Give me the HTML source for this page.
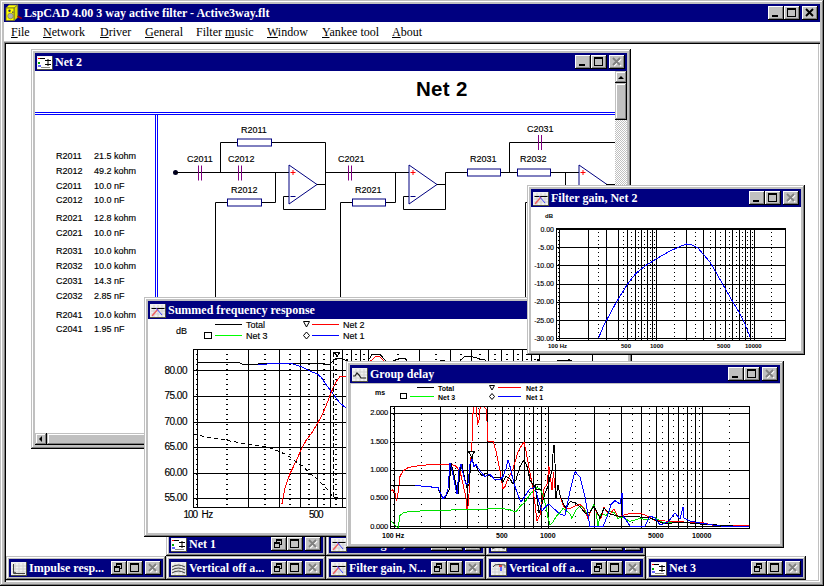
<!DOCTYPE html><html><head><meta charset="utf-8"><style>body{margin:0;width:824px;height:586px;overflow:hidden;position:relative;background:#c0c0c0}u{text-decoration:underline}</style></head><body><div style="position:absolute;left:0px;top:0px;width:824px;height:586px;background:#c0c0c0;box-shadow:inset -1px -1px 0 #000, inset 1px 1px 0 #c0c0c0, inset -2px -2px 0 #808080, inset 2px 2px 0 #fff;"></div><div style="position:absolute;left:4px;top:4px;width:816px;height:18px;background:#000080;"></div><div style="position:absolute;left:24px;top:6px;height:18px;line-height:18px;font:bold 12px 'Liberation Serif',serif;color:#fff;white-space:nowrap">LspCAD 4.00 3 way active filter - Active3way.flt</div><svg style="position:absolute;left:3px;top:3px" width="22" height="20"><g transform="translate(-3,-3)"><path d="M6 8 L9 5 L17.7 5 L14 8 Z" fill="#ffff00" stroke="#808040" stroke-width="0.8"/><path d="M14 8 L17.7 5 L17.7 17.5 L14 20.7 Z" fill="#e0e000" stroke="#808040" stroke-width="0.8"/><rect x="6" y="8" width="8" height="12.7" fill="#ffff00" stroke="#606020" stroke-width="0.8"/><circle cx="10.5" cy="16" r="2.8" fill="#b0b0b0" stroke="#707050" stroke-width="0.6"/><circle cx="9.5" cy="10.8" r="1.2" fill="#303060"/><rect x="12" y="11.5" width="1.5" height="1.5" fill="#606040"/><path d="M17.5 16.3 L21.8 18.5" stroke="#a00010" stroke-width="1.6"/></g></svg><div style="position:absolute;left:768px;top:6px;width:16px;height:14px;background:#c0c0c0;box-shadow:inset -1px -1px 0 #000, inset 1px 1px 0 #fff, inset -2px -2px 0 #808080;overflow:hidden"><div style="position:absolute;left:4px;top:9px;width:6px;height:2px;background:#000"></div></div><div style="position:absolute;left:784px;top:6px;width:16px;height:14px;background:#c0c0c0;box-shadow:inset -1px -1px 0 #000, inset 1px 1px 0 #fff, inset -2px -2px 0 #808080;overflow:hidden"><div style="position:absolute;left:3px;top:2px;width:7px;height:6px;border:1px solid #000;border-top-width:2px"></div></div><div style="position:absolute;left:802px;top:6px;width:16px;height:14px;background:#c0c0c0;box-shadow:inset -1px -1px 0 #000, inset 1px 1px 0 #fff, inset -2px -2px 0 #808080;overflow:hidden"><svg width="16" height="14" style="position:absolute;left:0;top:0"><path d="M4 3 L11 10 M11 3 L4 10" stroke="#000" stroke-width="1.9"/></svg></div><div style="position:absolute;left:4px;top:22px;width:816px;height:19px;background:#fff;"></div><div style="position:absolute;left:11px;top:26px;font:12px 'Liberation Serif',serif;color:#000;white-space:pre;line-height:1;"><u>F</u>ile</div><div style="position:absolute;left:43px;top:26px;font:12px 'Liberation Serif',serif;color:#000;white-space:pre;line-height:1;"><u>N</u>etwork</div><div style="position:absolute;left:100px;top:26px;font:12px 'Liberation Serif',serif;color:#000;white-space:pre;line-height:1;"><u>D</u>river</div><div style="position:absolute;left:145px;top:26px;font:12px 'Liberation Serif',serif;color:#000;white-space:pre;line-height:1;"><u>G</u>eneral</div><div style="position:absolute;left:196px;top:26px;font:12px 'Liberation Serif',serif;color:#000;white-space:pre;line-height:1;">Filter <u>m</u>usic</div><div style="position:absolute;left:267px;top:26px;font:12px 'Liberation Serif',serif;color:#000;white-space:pre;line-height:1;"><u>W</u>indow</div><div style="position:absolute;left:322px;top:26px;font:12px 'Liberation Serif',serif;color:#000;white-space:pre;line-height:1;"><u>Y</u>ankee tool</div><div style="position:absolute;left:392px;top:26px;font:12px 'Liberation Serif',serif;color:#000;white-space:pre;line-height:1;"><u>A</u>bout</div><div style="position:absolute;left:4px;top:42px;width:816px;height:540px;background:#fff;box-shadow:inset 1px 1px 0 #808080, inset 2px 2px 0 #000, inset -1px -1px 0 #fff, inset -2px -2px 0 #c0c0c0"></div><div style="position:absolute;left:31px;top:49px;width:600px;height:400px;background:#c0c0c0;box-shadow:inset -1px -1px 0 #000, inset 1px 1px 0 #c0c0c0, inset -2px -2px 0 #808080, inset 2px 2px 0 #fff;"></div><div style="position:absolute;left:35px;top:53px;width:592px;height:18px;background:#000080;"></div><div style="position:absolute;left:55px;top:55px;height:18px;line-height:18px;font:bold 12px 'Liberation Serif',serif;color:#fff;white-space:nowrap">Net 2</div><svg style="position:absolute;left:37px;top:56px" width="16" height="14"><rect x="0" y="0" width="16" height="14" fill="#505040"/><rect x="0" y="0" width="15" height="13" fill="#f0f0f0"/><path d="M1 4H15M1 7H15M1 10H15M4 1V13M8 1V13M12 1V13" stroke="#d0d0d0" stroke-width="1"/><rect x="1" y="1" width="14" height="12" fill="#fff"/><path d="M3 2.5 H8 M8 4.5 H14 M8 8.5 H14 M11 3 V10" stroke="#000" stroke-width="1"/><rect x="1" y="2" width="2" height="1" fill="#f00"/><rect x="1" y="6" width="2" height="2" fill="#0a0"/><rect x="1" y="9" width="3" height="2" fill="#66f"/><path d="M4 11.5 H13" stroke="#888" stroke-width="1"/></svg><div style="position:absolute;left:609px;top:55px;width:16px;height:14px;background:#c0c0c0;box-shadow:inset -1px -1px 0 #000, inset 1px 1px 0 #fff, inset -2px -2px 0 #808080;overflow:hidden"><svg width="16" height="14" style="position:absolute;left:0;top:0"><path d="M5 4 L12 11 M12 4 L5 11" stroke="#fff" stroke-width="1.6"/><path d="M4 3 L11 10 M11 3 L4 10" stroke="#808080" stroke-width="1.9"/></svg></div><div style="position:absolute;left:591px;top:55px;width:16px;height:14px;background:#c0c0c0;box-shadow:inset -1px -1px 0 #000, inset 1px 1px 0 #fff, inset -2px -2px 0 #808080;overflow:hidden"><div style="position:absolute;left:3px;top:2px;width:7px;height:6px;border:1px solid #000;border-top-width:2px"></div></div><div style="position:absolute;left:575px;top:55px;width:16px;height:14px;background:#c0c0c0;box-shadow:inset -1px -1px 0 #000, inset 1px 1px 0 #fff, inset -2px -2px 0 #808080;overflow:hidden"><div style="position:absolute;left:4px;top:9px;width:6px;height:2px;background:#000"></div></div><div style="position:absolute;left:35px;top:71px;width:580px;height:362px;background:#fff;overflow:hidden"><svg width="580" height="362" style="position:absolute;left:0;top:0"><g transform="translate(-35,-71)"><line x1="35" y1="112.5" x2="615" y2="112.5" stroke="#0000ff" stroke-width="1" /><line x1="35" y1="114.5" x2="615" y2="114.5" stroke="#0000ff" stroke-width="1" /><line x1="155.5" y1="114" x2="155.5" y2="433" stroke="#0000ff" stroke-width="1" /><line x1="157.5" y1="114" x2="157.5" y2="433" stroke="#0000ff" stroke-width="1" /><circle cx="175.5" cy="172.5" r="2.5" fill="#000020"/><polyline points="175.5,172.5 289.0,172.5" fill="none" stroke="#000" stroke-width="1" stroke-linejoin="round" stroke-linejoin="miter"/><polyline points="220.5,172.5 220.5,142.5 325.5,142.5 325.5,209.5 283.5,209.5 283.5,196.5 289.0,196.5" fill="none" stroke="#000" stroke-width="1" stroke-linejoin="round" stroke-linejoin="miter"/><polyline points="316.0,184.5 325.5,184.5" fill="none" stroke="#000" stroke-width="1" stroke-linejoin="round" stroke-linejoin="miter"/><polyline points="325.5,172.5 409.0,172.5" fill="none" stroke="#000" stroke-width="1" stroke-linejoin="round" stroke-linejoin="miter"/><polyline points="275.5,172.5 275.5,202.5 215.5,202.5 215.5,440.0" fill="none" stroke="#000" stroke-width="1" stroke-linejoin="round" stroke-linejoin="miter"/><rect x="237.5" y="139.0" width="34" height="7" fill="#fff" stroke="#000080" stroke-width="1"/><rect x="227.5" y="199.0" width="34" height="7" fill="#fff" stroke="#000080" stroke-width="1"/><line x1="198.5" y1="165.5" x2="198.5" y2="180.5" stroke="#800080" stroke-width="1" /><line x1="201.5" y1="165.5" x2="201.5" y2="180.5" stroke="#800080" stroke-width="1" /><line x1="238.5" y1="165.5" x2="238.5" y2="180.5" stroke="#800080" stroke-width="1" /><line x1="241.5" y1="165.5" x2="241.5" y2="180.5" stroke="#800080" stroke-width="1" /><polygon points="289.0,165 289.0,204 317,184.5" fill="#fff" stroke="#000080" stroke-width="1"/><line x1="290.5" y1="172.5" x2="295.5" y2="172.5" stroke="#ff0000" stroke-width="1" /><line x1="293.0" y1="170" x2="293.0" y2="175" stroke="#ff0000" stroke-width="1" /><line x1="290.5" y1="196.5" x2="295.5" y2="196.5" stroke="#000080" stroke-width="1" /><polyline points="395.5,172.5 395.5,202.5 340.5,202.5 340.5,440.0" fill="none" stroke="#000" stroke-width="1" stroke-linejoin="round" stroke-linejoin="miter"/><polyline points="409.0,196.5 403.5,196.5 403.5,209.5 445.5,209.5 445.5,172.5 467.0,172.5" fill="none" stroke="#000" stroke-width="1" stroke-linejoin="round" stroke-linejoin="miter"/><polyline points="436.0,184.5 445.5,184.5" fill="none" stroke="#000" stroke-width="1" stroke-linejoin="round" stroke-linejoin="miter"/><rect x="352.5" y="199.0" width="33" height="7" fill="#fff" stroke="#000080" stroke-width="1"/><line x1="348.5" y1="165.5" x2="348.5" y2="180.5" stroke="#800080" stroke-width="1" /><line x1="351.5" y1="165.5" x2="351.5" y2="180.5" stroke="#800080" stroke-width="1" /><polygon points="409.0,165 409.0,204 437,184.5" fill="#fff" stroke="#000080" stroke-width="1"/><line x1="410.5" y1="172.5" x2="415.5" y2="172.5" stroke="#ff0000" stroke-width="1" /><line x1="413.0" y1="170" x2="413.0" y2="175" stroke="#ff0000" stroke-width="1" /><line x1="410.5" y1="196.5" x2="415.5" y2="196.5" stroke="#000080" stroke-width="1" /><polyline points="467.0,172.5 579.0,172.5" fill="none" stroke="#000" stroke-width="1" stroke-linejoin="round" stroke-linejoin="miter"/><polyline points="509.5,172.5 509.5,142.5 620.0,142.5" fill="none" stroke="#000" stroke-width="1" stroke-linejoin="round" stroke-linejoin="miter"/><polyline points="565.5,172.5 565.5,440.0" fill="none" stroke="#000" stroke-width="1" stroke-linejoin="round" stroke-linejoin="miter"/><polyline points="525.5,440.0 525.5,202.5 565.5,202.5" fill="none" stroke="#000" stroke-width="1" stroke-linejoin="round" stroke-linejoin="miter"/><rect x="467.5" y="169.0" width="33" height="7" fill="#fff" stroke="#000080" stroke-width="1"/><rect x="517.5" y="169.0" width="33" height="7" fill="#fff" stroke="#000080" stroke-width="1"/><line x1="538.5" y1="135" x2="538.5" y2="150" stroke="#800080" stroke-width="1" /><line x1="541.5" y1="135" x2="541.5" y2="150" stroke="#800080" stroke-width="1" /><polygon points="579.0,165 579.0,204 607,184.5" fill="#fff" stroke="#000080" stroke-width="1"/><line x1="580.5" y1="172.5" x2="585.5" y2="172.5" stroke="#ff0000" stroke-width="1" /><line x1="583.0" y1="170" x2="583.0" y2="175" stroke="#ff0000" stroke-width="1" /><line x1="580.5" y1="196.5" x2="585.5" y2="196.5" stroke="#000080" stroke-width="1" /><polyline points="606.0,184.5 620.0,184.5" fill="none" stroke="#000" stroke-width="1" stroke-linejoin="round" stroke-linejoin="miter"/></g></svg></div><div style="position:absolute;left:416px;top:78.5px;font:bold 20.5px 'Liberation Sans',sans-serif;color:#000;white-space:pre;line-height:1;letter-spacing:0.3px">Net 2</div><div style="position:absolute;left:187px;top:154.5px;font:9px 'Liberation Sans',sans-serif;color:#000;white-space:pre;line-height:1;-webkit-text-stroke:0.15px #000;">C2011</div><div style="position:absolute;left:228px;top:154.5px;font:9px 'Liberation Sans',sans-serif;color:#000;white-space:pre;line-height:1;-webkit-text-stroke:0.15px #000;">C2012</div><div style="position:absolute;left:241px;top:125.5px;font:9px 'Liberation Sans',sans-serif;color:#000;white-space:pre;line-height:1;-webkit-text-stroke:0.15px #000;">R2011</div><div style="position:absolute;left:231px;top:185.5px;font:9px 'Liberation Sans',sans-serif;color:#000;white-space:pre;line-height:1;-webkit-text-stroke:0.15px #000;">R2012</div><div style="position:absolute;left:338px;top:154.5px;font:9px 'Liberation Sans',sans-serif;color:#000;white-space:pre;line-height:1;-webkit-text-stroke:0.15px #000;">C2021</div><div style="position:absolute;left:355px;top:185.5px;font:9px 'Liberation Sans',sans-serif;color:#000;white-space:pre;line-height:1;-webkit-text-stroke:0.15px #000;">R2021</div><div style="position:absolute;left:470px;top:154.5px;font:9px 'Liberation Sans',sans-serif;color:#000;white-space:pre;line-height:1;-webkit-text-stroke:0.15px #000;">R2031</div><div style="position:absolute;left:520px;top:154.5px;font:9px 'Liberation Sans',sans-serif;color:#000;white-space:pre;line-height:1;-webkit-text-stroke:0.15px #000;">R2032</div><div style="position:absolute;left:527px;top:124.5px;font:9px 'Liberation Sans',sans-serif;color:#000;white-space:pre;line-height:1;-webkit-text-stroke:0.15px #000;">C2031</div><div style="position:absolute;left:56px;top:152px;font:9px 'Liberation Sans',sans-serif;color:#000;white-space:pre;line-height:1;-webkit-text-stroke:0.15px #000;">R2011</div><div style="position:absolute;left:94px;top:152px;font:9px 'Liberation Sans',sans-serif;color:#000;white-space:pre;line-height:1;-webkit-text-stroke:0.15px #000;">21.5 kohm</div><div style="position:absolute;left:56px;top:167px;font:9px 'Liberation Sans',sans-serif;color:#000;white-space:pre;line-height:1;-webkit-text-stroke:0.15px #000;">R2012</div><div style="position:absolute;left:94px;top:167px;font:9px 'Liberation Sans',sans-serif;color:#000;white-space:pre;line-height:1;-webkit-text-stroke:0.15px #000;">49.2 kohm</div><div style="position:absolute;left:56px;top:182px;font:9px 'Liberation Sans',sans-serif;color:#000;white-space:pre;line-height:1;-webkit-text-stroke:0.15px #000;">C2011</div><div style="position:absolute;left:94px;top:182px;font:9px 'Liberation Sans',sans-serif;color:#000;white-space:pre;line-height:1;-webkit-text-stroke:0.15px #000;">10.0 nF</div><div style="position:absolute;left:56px;top:196px;font:9px 'Liberation Sans',sans-serif;color:#000;white-space:pre;line-height:1;-webkit-text-stroke:0.15px #000;">C2012</div><div style="position:absolute;left:94px;top:196px;font:9px 'Liberation Sans',sans-serif;color:#000;white-space:pre;line-height:1;-webkit-text-stroke:0.15px #000;">10.0 nF</div><div style="position:absolute;left:56px;top:214px;font:9px 'Liberation Sans',sans-serif;color:#000;white-space:pre;line-height:1;-webkit-text-stroke:0.15px #000;">R2021</div><div style="position:absolute;left:94px;top:214px;font:9px 'Liberation Sans',sans-serif;color:#000;white-space:pre;line-height:1;-webkit-text-stroke:0.15px #000;">12.8 kohm</div><div style="position:absolute;left:56px;top:229px;font:9px 'Liberation Sans',sans-serif;color:#000;white-space:pre;line-height:1;-webkit-text-stroke:0.15px #000;">C2021</div><div style="position:absolute;left:94px;top:229px;font:9px 'Liberation Sans',sans-serif;color:#000;white-space:pre;line-height:1;-webkit-text-stroke:0.15px #000;">10.0 nF</div><div style="position:absolute;left:56px;top:247px;font:9px 'Liberation Sans',sans-serif;color:#000;white-space:pre;line-height:1;-webkit-text-stroke:0.15px #000;">R2031</div><div style="position:absolute;left:94px;top:247px;font:9px 'Liberation Sans',sans-serif;color:#000;white-space:pre;line-height:1;-webkit-text-stroke:0.15px #000;">10.0 kohm</div><div style="position:absolute;left:56px;top:262px;font:9px 'Liberation Sans',sans-serif;color:#000;white-space:pre;line-height:1;-webkit-text-stroke:0.15px #000;">R2032</div><div style="position:absolute;left:94px;top:262px;font:9px 'Liberation Sans',sans-serif;color:#000;white-space:pre;line-height:1;-webkit-text-stroke:0.15px #000;">10.0 kohm</div><div style="position:absolute;left:56px;top:277px;font:9px 'Liberation Sans',sans-serif;color:#000;white-space:pre;line-height:1;-webkit-text-stroke:0.15px #000;">C2031</div><div style="position:absolute;left:94px;top:277px;font:9px 'Liberation Sans',sans-serif;color:#000;white-space:pre;line-height:1;-webkit-text-stroke:0.15px #000;">14.3 nF</div><div style="position:absolute;left:56px;top:292px;font:9px 'Liberation Sans',sans-serif;color:#000;white-space:pre;line-height:1;-webkit-text-stroke:0.15px #000;">C2032</div><div style="position:absolute;left:94px;top:292px;font:9px 'Liberation Sans',sans-serif;color:#000;white-space:pre;line-height:1;-webkit-text-stroke:0.15px #000;">2.85 nF</div><div style="position:absolute;left:56px;top:310.5px;font:9px 'Liberation Sans',sans-serif;color:#000;white-space:pre;line-height:1;-webkit-text-stroke:0.15px #000;">R2041</div><div style="position:absolute;left:94px;top:310.5px;font:9px 'Liberation Sans',sans-serif;color:#000;white-space:pre;line-height:1;-webkit-text-stroke:0.15px #000;">10.0 kohm</div><div style="position:absolute;left:56px;top:325px;font:9px 'Liberation Sans',sans-serif;color:#000;white-space:pre;line-height:1;-webkit-text-stroke:0.15px #000;">C2041</div><div style="position:absolute;left:94px;top:325px;font:9px 'Liberation Sans',sans-serif;color:#000;white-space:pre;line-height:1;-webkit-text-stroke:0.15px #000;">1.95 nF</div><div style="position:absolute;left:615px;top:71px;width:12px;height:362px;background:#c0c0c0;background-image:repeating-conic-gradient(#fff 0 25%, #c0c0c0 0 50%);background-size:2px 2px"></div><div style="position:absolute;left:615px;top:71px;width:12px;height:12px;background:#c0c0c0;box-shadow:inset -1px -1px 0 #000, inset 1px 1px 0 #c0c0c0, inset -2px -2px 0 #808080, inset 2px 2px 0 #fff;overflow:hidden"></div><svg style="position:absolute;left:615px;top:71px" width="12" height="12"><path d="M3 8 L6 5 L9 8 Z" fill="#000"/></svg><div style="position:absolute;left:615px;top:83px;width:12px;height:37px;background:#c0c0c0;box-shadow:inset -1px -1px 0 #000, inset 1px 1px 0 #c0c0c0, inset -2px -2px 0 #808080, inset 2px 2px 0 #fff;overflow:hidden"></div><div style="position:absolute;left:35px;top:433px;width:580px;height:12px;background:#c0c0c0;"></div><div style="position:absolute;left:35px;top:433px;width:12px;height:12px;background:#c0c0c0;box-shadow:inset -1px -1px 0 #000, inset 1px 1px 0 #c0c0c0, inset -2px -2px 0 #808080, inset 2px 2px 0 #fff;overflow:hidden"></div><svg style="position:absolute;left:35px;top:433px" width="12" height="12"><path d="M7 3 L4 6 L7 9 Z" fill="#000"/></svg><div style="position:absolute;left:47px;top:433px;width:568px;height:12px;background:#c0c0c0;box-shadow:inset -1px -1px 0 #000, inset 1px 1px 0 #c0c0c0, inset -2px -2px 0 #808080, inset 2px 2px 0 #fff;overflow:hidden"></div><div style="position:absolute;left:166px;top:532px;width:160px;height:24px;background:#c0c0c0;box-shadow:inset -1px -1px 0 #000, inset 1px 1px 0 #c0c0c0, inset -2px -2px 0 #808080, inset 2px 2px 0 #fff;"></div><div style="position:absolute;left:169px;top:535px;width:154px;height:18px;background:#000080;"></div><div style="position:absolute;left:189px;top:537px;height:18px;line-height:18px;font:bold 12px 'Liberation Serif',serif;color:#fff;white-space:nowrap">Net 1</div><svg style="position:absolute;left:171px;top:538px" width="16" height="14"><rect x="0" y="0" width="16" height="14" fill="#505040"/><rect x="0" y="0" width="15" height="13" fill="#f0f0f0"/><path d="M1 4H15M1 7H15M1 10H15M4 1V13M8 1V13M12 1V13" stroke="#d0d0d0" stroke-width="1"/><rect x="1" y="1" width="14" height="12" fill="#fff"/><path d="M3 2.5 H8 M8 4.5 H14 M8 8.5 H14 M11 3 V10" stroke="#000" stroke-width="1"/><rect x="1" y="2" width="2" height="1" fill="#f00"/><rect x="1" y="6" width="2" height="2" fill="#0a0"/><rect x="1" y="9" width="3" height="2" fill="#66f"/><path d="M4 11.5 H13" stroke="#888" stroke-width="1"/></svg><div style="position:absolute;left:305px;top:537px;width:16px;height:14px;background:#c0c0c0;box-shadow:inset -1px -1px 0 #000, inset 1px 1px 0 #fff, inset -2px -2px 0 #808080;overflow:hidden"><svg width="16" height="14" style="position:absolute;left:0;top:0"><path d="M5 4 L12 11 M12 4 L5 11" stroke="#fff" stroke-width="1.6"/><path d="M4 3 L11 10 M11 3 L4 10" stroke="#808080" stroke-width="1.9"/></svg></div><div style="position:absolute;left:287px;top:537px;width:16px;height:14px;background:#c0c0c0;box-shadow:inset -1px -1px 0 #000, inset 1px 1px 0 #fff, inset -2px -2px 0 #808080;overflow:hidden"><div style="position:absolute;left:3px;top:2px;width:7px;height:6px;border:1px solid #000;border-top-width:2px"></div></div><div style="position:absolute;left:271px;top:537px;width:16px;height:14px;background:#c0c0c0;box-shadow:inset -1px -1px 0 #000, inset 1px 1px 0 #fff, inset -2px -2px 0 #808080;overflow:hidden"><div style="position:absolute;left:5px;top:2px;width:4px;height:3px;border:1px solid #000;border-top-width:2px"></div><div style="position:absolute;left:3px;top:5px;width:4px;height:3px;border:1px solid #000;border-top-width:2px;background:#c0c0c0"></div></div><div style="position:absolute;left:326px;top:532px;width:160px;height:24px;background:#c0c0c0;box-shadow:inset -1px -1px 0 #000, inset 1px 1px 0 #c0c0c0, inset -2px -2px 0 #808080, inset 2px 2px 0 #fff;"></div><div style="position:absolute;left:329px;top:535px;width:154px;height:18px;background:#000080;"></div><div style="position:absolute;left:349px;top:537px;height:18px;line-height:18px;font:bold 12px 'Liberation Serif',serif;color:#fff;white-space:nowrap">Filter gain, N...</div><svg style="position:absolute;left:331px;top:538px" width="16" height="14"><rect x="0" y="0" width="16" height="14" fill="#505040"/><rect x="0" y="0" width="15" height="13" fill="#f0f0f0"/><path d="M1 4H15M1 7H15M1 10H15M4 1V13M8 1V13M12 1V13" stroke="#d0d0d0" stroke-width="1"/><path d="M1.5 4.5H14.5" stroke="#000" stroke-width="1"/><path d="M2 12 L8 5" stroke="#f06060" stroke-width="1.5"/><path d="M6 4 L12 11" stroke="#4040ff" stroke-width="1"/></svg><div style="position:absolute;left:465px;top:537px;width:16px;height:14px;background:#c0c0c0;box-shadow:inset -1px -1px 0 #000, inset 1px 1px 0 #fff, inset -2px -2px 0 #808080;overflow:hidden"><svg width="16" height="14" style="position:absolute;left:0;top:0"><path d="M5 4 L12 11 M12 4 L5 11" stroke="#fff" stroke-width="1.6"/><path d="M4 3 L11 10 M11 3 L4 10" stroke="#808080" stroke-width="1.9"/></svg></div><div style="position:absolute;left:447px;top:537px;width:16px;height:14px;background:#c0c0c0;box-shadow:inset -1px -1px 0 #000, inset 1px 1px 0 #fff, inset -2px -2px 0 #808080;overflow:hidden"><div style="position:absolute;left:3px;top:2px;width:7px;height:6px;border:1px solid #000;border-top-width:2px"></div></div><div style="position:absolute;left:431px;top:537px;width:16px;height:14px;background:#c0c0c0;box-shadow:inset -1px -1px 0 #000, inset 1px 1px 0 #fff, inset -2px -2px 0 #808080;overflow:hidden"><div style="position:absolute;left:5px;top:2px;width:4px;height:3px;border:1px solid #000;border-top-width:2px"></div><div style="position:absolute;left:3px;top:5px;width:4px;height:3px;border:1px solid #000;border-top-width:2px;background:#c0c0c0"></div></div><div style="position:absolute;left:486px;top:532px;width:160px;height:24px;background:#c0c0c0;box-shadow:inset -1px -1px 0 #000, inset 1px 1px 0 #c0c0c0, inset -2px -2px 0 #808080, inset 2px 2px 0 #fff;"></div><div style="position:absolute;left:489px;top:535px;width:154px;height:18px;background:#000080;"></div><div style="position:absolute;left:509px;top:537px;height:18px;line-height:18px;font:bold 12px 'Liberation Serif',serif;color:#fff;white-space:nowrap">Vertical off a...</div><svg style="position:absolute;left:491px;top:538px" width="16" height="14"><rect x="0" y="0" width="16" height="14" fill="#505040"/><rect x="0" y="0" width="15" height="13" fill="#f0f0f0"/><path d="M1 4H15M1 7H15M1 10H15M4 1V13M8 1V13M12 1V13" stroke="#d0d0d0" stroke-width="1"/><path d="M1 5 Q7 1 14 5 M1 8 Q7 4 14 8 M1 11 Q7 7 14 11" stroke="#404040" fill="none" stroke-width="1"/></svg><div style="position:absolute;left:625px;top:537px;width:16px;height:14px;background:#c0c0c0;box-shadow:inset -1px -1px 0 #000, inset 1px 1px 0 #fff, inset -2px -2px 0 #808080;overflow:hidden"><svg width="16" height="14" style="position:absolute;left:0;top:0"><path d="M5 4 L12 11 M12 4 L5 11" stroke="#fff" stroke-width="1.6"/><path d="M4 3 L11 10 M11 3 L4 10" stroke="#808080" stroke-width="1.9"/></svg></div><div style="position:absolute;left:607px;top:537px;width:16px;height:14px;background:#c0c0c0;box-shadow:inset -1px -1px 0 #000, inset 1px 1px 0 #fff, inset -2px -2px 0 #808080;overflow:hidden"><div style="position:absolute;left:3px;top:2px;width:7px;height:6px;border:1px solid #000;border-top-width:2px"></div></div><div style="position:absolute;left:591px;top:537px;width:16px;height:14px;background:#c0c0c0;box-shadow:inset -1px -1px 0 #000, inset 1px 1px 0 #fff, inset -2px -2px 0 #808080;overflow:hidden"><div style="position:absolute;left:5px;top:2px;width:4px;height:3px;border:1px solid #000;border-top-width:2px"></div><div style="position:absolute;left:3px;top:5px;width:4px;height:3px;border:1px solid #000;border-top-width:2px;background:#c0c0c0"></div></div><div style="position:absolute;left:144px;top:297px;width:488px;height:240px;background:#c0c0c0;box-shadow:inset -1px -1px 0 #000, inset 1px 1px 0 #c0c0c0, inset -2px -2px 0 #808080, inset 2px 2px 0 #fff;"></div><div style="position:absolute;left:148px;top:301px;width:480px;height:18px;background:#000080;"></div><div style="position:absolute;left:168px;top:303px;height:18px;line-height:18px;font:bold 12px 'Liberation Serif',serif;color:#fff;white-space:nowrap">Summed frequency response</div><svg style="position:absolute;left:150px;top:304px" width="16" height="14"><rect x="0" y="0" width="16" height="14" fill="#505040"/><rect x="0" y="0" width="15" height="13" fill="#f0f0f0"/><path d="M1 4H15M1 7H15M1 10H15M4 1V13M8 1V13M12 1V13" stroke="#d0d0d0" stroke-width="1"/><path d="M1.5 4.5H14.5" stroke="#000" stroke-width="1"/><path d="M2 12 L8 5" stroke="#f06060" stroke-width="1.5"/><path d="M6 4 L12 11" stroke="#4040ff" stroke-width="1"/></svg><div style="position:absolute;left:610px;top:303px;width:16px;height:14px;background:#c0c0c0;box-shadow:inset -1px -1px 0 #000, inset 1px 1px 0 #fff, inset -2px -2px 0 #808080;overflow:hidden"><svg width="16" height="14" style="position:absolute;left:0;top:0"><path d="M5 4 L12 11 M12 4 L5 11" stroke="#fff" stroke-width="1.6"/><path d="M4 3 L11 10 M11 3 L4 10" stroke="#808080" stroke-width="1.9"/></svg></div><div style="position:absolute;left:592px;top:303px;width:16px;height:14px;background:#c0c0c0;box-shadow:inset -1px -1px 0 #000, inset 1px 1px 0 #fff, inset -2px -2px 0 #808080;overflow:hidden"><div style="position:absolute;left:3px;top:2px;width:7px;height:6px;border:1px solid #000;border-top-width:2px"></div></div><div style="position:absolute;left:576px;top:303px;width:16px;height:14px;background:#c0c0c0;box-shadow:inset -1px -1px 0 #000, inset 1px 1px 0 #fff, inset -2px -2px 0 #808080;overflow:hidden"><div style="position:absolute;left:4px;top:9px;width:6px;height:2px;background:#000"></div></div><div style="position:absolute;left:148px;top:319px;width:480px;height:214px;background:#fff;overflow:hidden"><svg width="512" height="214" style="position:absolute;left:0;top:0"><g transform="translate(-148,-319)"><line x1="197.5" y1="349" x2="197.5" y2="507" stroke="#000" stroke-width="1" /><line x1="248.5" y1="349" x2="248.5" y2="507" stroke="#000" stroke-width="1" /><line x1="279.5" y1="349" x2="279.5" y2="507" stroke="#000" stroke-width="1" /><line x1="300.5" y1="349" x2="300.5" y2="507" stroke="#000" stroke-width="1" /><line x1="317.5" y1="349" x2="317.5" y2="507" stroke="#000" stroke-width="1" /><line x1="330.5" y1="349" x2="330.5" y2="507" stroke="#000" stroke-width="1" /><line x1="342.5" y1="349" x2="342.5" y2="507" stroke="#000" stroke-width="1" /><line x1="351.5" y1="349" x2="351.5" y2="507" stroke="#000" stroke-width="1" /><line x1="360.5" y1="349" x2="360.5" y2="507" stroke="#000" stroke-width="1" /><line x1="368.5" y1="349" x2="368.5" y2="507" stroke="#000" stroke-width="1" /><line x1="419.5" y1="349" x2="419.5" y2="507" stroke="#000" stroke-width="1" /><line x1="450.5" y1="349" x2="450.5" y2="507" stroke="#000" stroke-width="1" /><line x1="471.5" y1="349" x2="471.5" y2="507" stroke="#000" stroke-width="1" /><line x1="488.5" y1="349" x2="488.5" y2="507" stroke="#000" stroke-width="1" /><line x1="501.5" y1="349" x2="501.5" y2="507" stroke="#000" stroke-width="1" /><line x1="513.5" y1="349" x2="513.5" y2="507" stroke="#000" stroke-width="1" /><line x1="522.5" y1="349" x2="522.5" y2="507" stroke="#000" stroke-width="1" /><line x1="531.5" y1="349" x2="531.5" y2="507" stroke="#000" stroke-width="1" /><line x1="539.5" y1="349" x2="539.5" y2="507" stroke="#000" stroke-width="1" /><line x1="227" y1="354" x2="227" y2="507" stroke="#000" stroke-width="2" stroke-dasharray="1 4" shape-rendering="crispEdges"/><line x1="265" y1="354" x2="265" y2="507" stroke="#000" stroke-width="2" stroke-dasharray="1 4" shape-rendering="crispEdges"/><line x1="290" y1="354" x2="290" y2="507" stroke="#000" stroke-width="2" stroke-dasharray="1 4" shape-rendering="crispEdges"/><line x1="309" y1="354" x2="309" y2="507" stroke="#000" stroke-width="2" stroke-dasharray="1 4" shape-rendering="crispEdges"/><line x1="324" y1="354" x2="324" y2="507" stroke="#000" stroke-width="2" stroke-dasharray="1 4" shape-rendering="crispEdges"/><line x1="336" y1="354" x2="336" y2="507" stroke="#000" stroke-width="2" stroke-dasharray="1 4" shape-rendering="crispEdges"/><line x1="347" y1="354" x2="347" y2="507" stroke="#000" stroke-width="2" stroke-dasharray="1 4" shape-rendering="crispEdges"/><line x1="356" y1="354" x2="356" y2="507" stroke="#000" stroke-width="2" stroke-dasharray="1 4" shape-rendering="crispEdges"/><line x1="364" y1="354" x2="364" y2="507" stroke="#000" stroke-width="2" stroke-dasharray="1 4" shape-rendering="crispEdges"/><line x1="398" y1="354" x2="398" y2="507" stroke="#000" stroke-width="2" stroke-dasharray="1 4" shape-rendering="crispEdges"/><line x1="436" y1="354" x2="436" y2="507" stroke="#000" stroke-width="2" stroke-dasharray="1 4" shape-rendering="crispEdges"/><line x1="461" y1="354" x2="461" y2="507" stroke="#000" stroke-width="2" stroke-dasharray="1 4" shape-rendering="crispEdges"/><line x1="480" y1="354" x2="480" y2="507" stroke="#000" stroke-width="2" stroke-dasharray="1 4" shape-rendering="crispEdges"/><line x1="495" y1="354" x2="495" y2="507" stroke="#000" stroke-width="2" stroke-dasharray="1 4" shape-rendering="crispEdges"/><line x1="507" y1="354" x2="507" y2="507" stroke="#000" stroke-width="2" stroke-dasharray="1 4" shape-rendering="crispEdges"/><line x1="518" y1="354" x2="518" y2="507" stroke="#000" stroke-width="2" stroke-dasharray="1 4" shape-rendering="crispEdges"/><line x1="527" y1="354" x2="527" y2="507" stroke="#000" stroke-width="2" stroke-dasharray="1 4" shape-rendering="crispEdges"/><line x1="535" y1="354" x2="535" y2="507" stroke="#000" stroke-width="2" stroke-dasharray="1 4" shape-rendering="crispEdges"/><line x1="569" y1="354" x2="569" y2="507" stroke="#000" stroke-width="2" stroke-dasharray="1 4" shape-rendering="crispEdges"/><line x1="196.5" y1="354" x2="196.5" y2="507" stroke="#000" stroke-width="1" stroke-dasharray="1 4" shape-rendering="crispEdges"/><line x1="193" y1="370.5" x2="592" y2="370.5" stroke="#000" stroke-width="1" /><line x1="193" y1="396.5" x2="592" y2="396.5" stroke="#000" stroke-width="1" /><line x1="193" y1="422.5" x2="592" y2="422.5" stroke="#000" stroke-width="1" /><line x1="193" y1="447.5" x2="592" y2="447.5" stroke="#000" stroke-width="1" /><line x1="193" y1="473.5" x2="592" y2="473.5" stroke="#000" stroke-width="1" /><line x1="193" y1="498.5" x2="592" y2="498.5" stroke="#000" stroke-width="1" /><rect x="193.5" y="349.5" width="399" height="158" fill="none" stroke="#000" stroke-width="1"/><line x1="215" y1="324.5" x2="242" y2="324.5" stroke="#000" stroke-width="1" /><line x1="215" y1="335.5" x2="242" y2="335.5" stroke="#00ff00" stroke-width="1" /><line x1="312" y1="324.5" x2="339" y2="324.5" stroke="#ff0000" stroke-width="1" /><line x1="312" y1="335.5" x2="339" y2="335.5" stroke="#0000ff" stroke-width="1" /><rect x="204.5" y="332.5" width="7" height="6" fill="none" stroke="#000"/><path d="M303.5 321.5 L309.5 321.5 L306.5 327 Z" fill="none" stroke="#000"/><path d="M306.5 332 L309.5 335.5 L306.5 339 L303.5 335.5 Z" fill="none" stroke="#000"/><clipPath id="c1"><rect x="193" y="349" width="399" height="158"/></clipPath><g clip-path="url(#c1)" shape-rendering="crispEdges"><polyline points="197.0,362.8 240.0,362.8 242.0,364.0 258.0,364.0 272.0,363.0 320.0,363.0 325.0,364.0 330.0,364.0 333.0,361.0 336.0,358.5 341.0,358.5 345.0,360.0 350.0,362.0 360.0,363.0 368.0,361.0 372.0,354.5 380.0,354.5 386.0,361.0 390.0,363.0 393.0,361.0 399.5,358.5 405.5,359.0 407.0,361.0 410.0,363.0 438.0,363.0 441.0,360.0 444.0,360.0 447.0,363.0 458.0,363.0 460.0,361.0 465.0,356.0 470.0,356.0 480.0,359.0 485.0,360.0 488.0,363.0 536.0,363.0 538.0,359.0 541.0,363.0 556.0,363.0 558.0,360.0 570.0,360.0 575.0,363.0 592.0,363.0" fill="none" stroke="#000" stroke-width="1.0" stroke-linejoin="round" /><polyline points="258.0,364.0 265.0,364.5 271.0,363.0 290.0,363.0 296.0,365.0 303.0,367.5 310.0,371.0 317.0,374.0 321.0,377.0 325.0,383.0 330.0,390.0 333.0,394.0 336.0,398.0 340.0,403.0 346.0,408.0 360.0,420.0" fill="none" stroke="#0000ff" stroke-width="1.0" stroke-linejoin="round" /><polyline points="282.0,503.6 285.0,488.0 290.0,473.6 296.0,461.3 301.0,450.0 306.0,440.6 312.0,432.4 317.0,424.4 322.0,415.0 326.0,406.0 330.0,395.5 333.0,388.0 336.0,382.0 340.0,376.5 346.0,376.5 360.0,370.0 368.0,363.0 372.0,360.0 376.0,356.0 380.0,357.0 384.0,361.0 388.0,364.0" fill="none" stroke="#ff0000" stroke-width="1.0" stroke-linejoin="round" /><polyline points="193.0,434.4 200.0,435.5 212.0,438.2 225.0,439.6 230.0,441.0 245.0,443.7 260.0,445.8 265.0,446.4 275.0,449.9 285.0,454.0 290.0,457.1 297.0,462.3 303.0,466.4 310.0,473.6 318.0,479.8 325.0,487.0 330.0,492.2 333.0,497.4 336.0,497.4" fill="none" stroke="#000" stroke-width="1" stroke-linejoin="round" stroke-dasharray="4 3"/><polyline points="333.5,352.0 333.5,497.5 338.0,497.5" fill="none" stroke="#000" stroke-width="1" stroke-linejoin="round" stroke-dasharray="5 2"/><path d="M334.5 352.5 L339.5 352.5 L337 357 Z" fill="none" stroke="#000" stroke-width="1"/></g></g></svg></div><div style="position:absolute;left:176px;top:327px;font:9px 'Liberation Sans',sans-serif;color:#000;white-space:pre;line-height:1;-webkit-text-stroke:0.15px #000;">dB</div><div style="position:absolute;left:246px;top:321px;font:9px 'Liberation Sans',sans-serif;color:#000;white-space:pre;line-height:1;-webkit-text-stroke:0.15px #000;">Total</div><div style="position:absolute;left:246px;top:332px;font:9px 'Liberation Sans',sans-serif;color:#000;white-space:pre;line-height:1;-webkit-text-stroke:0.15px #000;">Net 3</div><div style="position:absolute;left:343px;top:321px;font:9px 'Liberation Sans',sans-serif;color:#000;white-space:pre;line-height:1;-webkit-text-stroke:0.15px #000;">Net 2</div><div style="position:absolute;left:343px;top:332px;font:9px 'Liberation Sans',sans-serif;color:#000;white-space:pre;line-height:1;-webkit-text-stroke:0.15px #000;">Net 1</div><div style="position:absolute;left:147px;top:365.5px;font:10px 'Liberation Sans',sans-serif;color:#000;white-space:pre;line-height:1;-webkit-text-stroke:0.15px #000;width:40px;text-align:right;letter-spacing:-0.5px">80.00</div><div style="position:absolute;left:147px;top:391.08px;font:10px 'Liberation Sans',sans-serif;color:#000;white-space:pre;line-height:1;-webkit-text-stroke:0.15px #000;width:40px;text-align:right;letter-spacing:-0.5px">75.00</div><div style="position:absolute;left:147px;top:416.65999999999997px;font:10px 'Liberation Sans',sans-serif;color:#000;white-space:pre;line-height:1;-webkit-text-stroke:0.15px #000;width:40px;text-align:right;letter-spacing:-0.5px">70.00</div><div style="position:absolute;left:147px;top:442.24px;font:10px 'Liberation Sans',sans-serif;color:#000;white-space:pre;line-height:1;-webkit-text-stroke:0.15px #000;width:40px;text-align:right;letter-spacing:-0.5px">65.00</div><div style="position:absolute;left:147px;top:467.82px;font:10px 'Liberation Sans',sans-serif;color:#000;white-space:pre;line-height:1;-webkit-text-stroke:0.15px #000;width:40px;text-align:right;letter-spacing:-0.5px">60.00</div><div style="position:absolute;left:147px;top:493.4px;font:10px 'Liberation Sans',sans-serif;color:#000;white-space:pre;line-height:1;-webkit-text-stroke:0.15px #000;width:40px;text-align:right;letter-spacing:-0.5px">55.00</div><div style="position:absolute;left:183.5px;top:510px;font:10px 'Liberation Sans',sans-serif;color:#000;white-space:pre;line-height:1;-webkit-text-stroke:0.15px #000;letter-spacing:-1px">100</div><div style="position:absolute;left:201.5px;top:510px;font:10px 'Liberation Sans',sans-serif;color:#000;white-space:pre;line-height:1;-webkit-text-stroke:0.15px #000;letter-spacing:-0.5px">Hz</div><div style="position:absolute;left:309px;top:510px;font:10px 'Liberation Sans',sans-serif;color:#000;white-space:pre;line-height:1;-webkit-text-stroke:0.15px #000;letter-spacing:-1px">500</div><div style="position:absolute;left:527px;top:185px;width:278px;height:170px;background:#c0c0c0;box-shadow:inset -1px -1px 0 #000, inset 1px 1px 0 #c0c0c0, inset -2px -2px 0 #808080, inset 2px 2px 0 #fff;"></div><div style="position:absolute;left:531px;top:189px;width:270px;height:18px;background:#000080;"></div><div style="position:absolute;left:551px;top:191px;height:18px;line-height:18px;font:bold 12px 'Liberation Serif',serif;color:#fff;white-space:nowrap">Filter gain, Net 2</div><svg style="position:absolute;left:533px;top:192px" width="16" height="14"><rect x="0" y="0" width="16" height="14" fill="#505040"/><rect x="0" y="0" width="15" height="13" fill="#f0f0f0"/><path d="M1 4H15M1 7H15M1 10H15M4 1V13M8 1V13M12 1V13" stroke="#d0d0d0" stroke-width="1"/><path d="M1.5 4.5H14.5" stroke="#000" stroke-width="1"/><path d="M2 12 L8 5" stroke="#f06060" stroke-width="1.5"/><path d="M6 4 L12 11" stroke="#4040ff" stroke-width="1"/></svg><div style="position:absolute;left:783px;top:191px;width:16px;height:14px;background:#c0c0c0;box-shadow:inset -1px -1px 0 #000, inset 1px 1px 0 #fff, inset -2px -2px 0 #808080;overflow:hidden"><svg width="16" height="14" style="position:absolute;left:0;top:0"><path d="M5 4 L12 11 M12 4 L5 11" stroke="#fff" stroke-width="1.6"/><path d="M4 3 L11 10 M11 3 L4 10" stroke="#808080" stroke-width="1.9"/></svg></div><div style="position:absolute;left:765px;top:191px;width:16px;height:14px;background:#c0c0c0;box-shadow:inset -1px -1px 0 #000, inset 1px 1px 0 #fff, inset -2px -2px 0 #808080;overflow:hidden"><div style="position:absolute;left:3px;top:2px;width:7px;height:6px;border:1px solid #000;border-top-width:2px"></div></div><div style="position:absolute;left:749px;top:191px;width:16px;height:14px;background:#c0c0c0;box-shadow:inset -1px -1px 0 #000, inset 1px 1px 0 #fff, inset -2px -2px 0 #808080;overflow:hidden"><div style="position:absolute;left:4px;top:9px;width:6px;height:2px;background:#000"></div></div><div style="position:absolute;left:531px;top:207px;width:270px;height:144px;background:#fff;overflow:hidden"><svg width="270" height="144" style="position:absolute;left:0;top:0"><g transform="translate(-531,-207)"><line x1="559.5" y1="228" x2="559.5" y2="340" stroke="#000" stroke-width="1" /><line x1="588.5" y1="228" x2="588.5" y2="340" stroke="#000" stroke-width="1" /><line x1="606.5" y1="228" x2="606.5" y2="340" stroke="#000" stroke-width="1" /><line x1="618.5" y1="228" x2="618.5" y2="340" stroke="#000" stroke-width="1" /><line x1="627.5" y1="228" x2="627.5" y2="340" stroke="#000" stroke-width="1" /><line x1="635.5" y1="228" x2="635.5" y2="340" stroke="#000" stroke-width="1" /><line x1="641.5" y1="228" x2="641.5" y2="340" stroke="#000" stroke-width="1" /><line x1="647.5" y1="228" x2="647.5" y2="340" stroke="#000" stroke-width="1" /><line x1="652.5" y1="228" x2="652.5" y2="340" stroke="#000" stroke-width="1" /><line x1="656.5" y1="228" x2="656.5" y2="340" stroke="#000" stroke-width="1" /><line x1="686.5" y1="228" x2="686.5" y2="340" stroke="#000" stroke-width="1" /><line x1="703.5" y1="228" x2="703.5" y2="340" stroke="#000" stroke-width="1" /><line x1="715.5" y1="228" x2="715.5" y2="340" stroke="#000" stroke-width="1" /><line x1="725.5" y1="228" x2="725.5" y2="340" stroke="#000" stroke-width="1" /><line x1="732.5" y1="228" x2="732.5" y2="340" stroke="#000" stroke-width="1" /><line x1="739.5" y1="228" x2="739.5" y2="340" stroke="#000" stroke-width="1" /><line x1="745.5" y1="228" x2="745.5" y2="340" stroke="#000" stroke-width="1" /><line x1="750.5" y1="228" x2="750.5" y2="340" stroke="#000" stroke-width="1" /><line x1="754.5" y1="228" x2="754.5" y2="340" stroke="#000" stroke-width="1" /><line x1="598.5" y1="232" x2="598.5" y2="340" stroke="#000" stroke-width="1" stroke-dasharray="1 3" shape-rendering="crispEdges"/><line x1="623.5" y1="232" x2="623.5" y2="340" stroke="#000" stroke-width="1" stroke-dasharray="1 3" shape-rendering="crispEdges"/><line x1="631.5" y1="232" x2="631.5" y2="340" stroke="#000" stroke-width="1" stroke-dasharray="1 3" shape-rendering="crispEdges"/><line x1="638.5" y1="232" x2="638.5" y2="340" stroke="#000" stroke-width="1" stroke-dasharray="1 3" shape-rendering="crispEdges"/><line x1="644.5" y1="232" x2="644.5" y2="340" stroke="#000" stroke-width="1" stroke-dasharray="1 3" shape-rendering="crispEdges"/><line x1="650.5" y1="232" x2="650.5" y2="340" stroke="#000" stroke-width="1" stroke-dasharray="1 3" shape-rendering="crispEdges"/><line x1="654.5" y1="232" x2="654.5" y2="340" stroke="#000" stroke-width="1" stroke-dasharray="1 3" shape-rendering="crispEdges"/><line x1="674.5" y1="232" x2="674.5" y2="340" stroke="#000" stroke-width="1" stroke-dasharray="1 3" shape-rendering="crispEdges"/><line x1="695.5" y1="232" x2="695.5" y2="340" stroke="#000" stroke-width="1" stroke-dasharray="1 3" shape-rendering="crispEdges"/><line x1="710.5" y1="232" x2="710.5" y2="340" stroke="#000" stroke-width="1" stroke-dasharray="1 3" shape-rendering="crispEdges"/><line x1="720.5" y1="232" x2="720.5" y2="340" stroke="#000" stroke-width="1" stroke-dasharray="1 3" shape-rendering="crispEdges"/><line x1="729.5" y1="232" x2="729.5" y2="340" stroke="#000" stroke-width="1" stroke-dasharray="1 3" shape-rendering="crispEdges"/><line x1="736.5" y1="232" x2="736.5" y2="340" stroke="#000" stroke-width="1" stroke-dasharray="1 3" shape-rendering="crispEdges"/><line x1="742.5" y1="232" x2="742.5" y2="340" stroke="#000" stroke-width="1" stroke-dasharray="1 3" shape-rendering="crispEdges"/><line x1="747.5" y1="232" x2="747.5" y2="340" stroke="#000" stroke-width="1" stroke-dasharray="1 3" shape-rendering="crispEdges"/><line x1="752.5" y1="232" x2="752.5" y2="340" stroke="#000" stroke-width="1" stroke-dasharray="1 3" shape-rendering="crispEdges"/><line x1="771.5" y1="232" x2="771.5" y2="340" stroke="#000" stroke-width="1" stroke-dasharray="1 3" shape-rendering="crispEdges"/><line x1="558.5" y1="232" x2="558.5" y2="340" stroke="#000" stroke-width="1" stroke-dasharray="1 3" shape-rendering="crispEdges"/><line x1="556" y1="229.5" x2="785" y2="229.5" stroke="#000" stroke-width="1" /><line x1="556" y1="247.5" x2="785" y2="247.5" stroke="#000" stroke-width="1" /><line x1="556" y1="265.5" x2="785" y2="265.5" stroke="#000" stroke-width="1" /><line x1="556" y1="284.5" x2="785" y2="284.5" stroke="#000" stroke-width="1" /><line x1="556" y1="302.5" x2="785" y2="302.5" stroke="#000" stroke-width="1" /><line x1="556" y1="320.5" x2="785" y2="320.5" stroke="#000" stroke-width="1" /><line x1="556" y1="338.5" x2="785" y2="338.5" stroke="#000" stroke-width="1" /><rect x="556.5" y="228.5" width="229" height="112" fill="none" stroke="#000" stroke-width="1"/><clipPath id="c2"><rect x="557" y="229" width="228" height="110"/></clipPath><g clip-path="url(#c2)"><polyline points="598.6,338.0 604.0,325.0 611.0,312.0 617.0,301.0 622.0,293.0 627.0,285.0 632.0,278.0 637.0,272.5 645.0,266.0 657.0,258.5 670.0,251.0 680.0,246.5 686.5,244.0 692.0,245.0 698.0,248.0 703.6,254.6 710.0,262.0 715.8,272.0 724.8,288.0 734.0,303.8 740.0,314.0 745.0,324.0 750.0,337.0" fill="none" stroke="#0000ff" stroke-width="1" stroke-linejoin="round" shape-rendering="crispEdges"/></g></g></svg></div><div style="position:absolute;left:545px;top:213px;font:bold 6px 'Liberation Sans',sans-serif;color:#000;white-space:pre;line-height:1;">dB</div><div style="position:absolute;left:514px;top:225.5px;font:7px 'Liberation Sans',sans-serif;color:#000;white-space:pre;line-height:1;-webkit-text-stroke:0.15px #000;width:40px;text-align:right">0.00</div><div style="position:absolute;left:514px;top:243.72px;font:7px 'Liberation Sans',sans-serif;color:#000;white-space:pre;line-height:1;-webkit-text-stroke:0.15px #000;width:40px;text-align:right">-5.00</div><div style="position:absolute;left:514px;top:261.94px;font:7px 'Liberation Sans',sans-serif;color:#000;white-space:pre;line-height:1;-webkit-text-stroke:0.15px #000;width:40px;text-align:right">-10.00</div><div style="position:absolute;left:514px;top:280.15999999999997px;font:7px 'Liberation Sans',sans-serif;color:#000;white-space:pre;line-height:1;-webkit-text-stroke:0.15px #000;width:40px;text-align:right">-15.00</div><div style="position:absolute;left:514px;top:298.38px;font:7px 'Liberation Sans',sans-serif;color:#000;white-space:pre;line-height:1;-webkit-text-stroke:0.15px #000;width:40px;text-align:right">-20.00</div><div style="position:absolute;left:514px;top:316.6px;font:7px 'Liberation Sans',sans-serif;color:#000;white-space:pre;line-height:1;-webkit-text-stroke:0.15px #000;width:40px;text-align:right">-25.00</div><div style="position:absolute;left:514px;top:334.82px;font:7px 'Liberation Sans',sans-serif;color:#000;white-space:pre;line-height:1;-webkit-text-stroke:0.15px #000;width:40px;text-align:right">-30.00</div><div style="position:absolute;left:548px;top:342.5px;font:bold 6px 'Liberation Sans',sans-serif;color:#000;white-space:pre;line-height:1;">100 Hz</div><div style="position:absolute;left:621px;top:342.5px;font:bold 6px 'Liberation Sans',sans-serif;color:#000;white-space:pre;line-height:1;">500</div><div style="position:absolute;left:650px;top:342.5px;font:bold 6px 'Liberation Sans',sans-serif;color:#000;white-space:pre;line-height:1;">1000</div><div style="position:absolute;left:717px;top:342.5px;font:bold 6px 'Liberation Sans',sans-serif;color:#000;white-space:pre;line-height:1;">5000</div><div style="position:absolute;left:745px;top:342.5px;font:bold 6px 'Liberation Sans',sans-serif;color:#000;white-space:pre;line-height:1;">10000</div><div style="position:absolute;left:346px;top:361px;width:438px;height:187px;background:#c0c0c0;box-shadow:inset -1px -1px 0 #000, inset 1px 1px 0 #c0c0c0, inset -2px -2px 0 #808080, inset 2px 2px 0 #fff;"></div><div style="position:absolute;left:350px;top:365px;width:430px;height:18px;background:#000080;"></div><div style="position:absolute;left:370px;top:367px;height:18px;line-height:18px;font:bold 12px 'Liberation Serif',serif;color:#fff;white-space:nowrap">Group delay</div><svg style="position:absolute;left:352px;top:368px" width="16" height="14"><rect x="0" y="0" width="16" height="14" fill="#505040"/><rect x="0" y="0" width="15" height="13" fill="#f0f0f0"/><path d="M1 4H15M1 7H15M1 10H15M4 1V13M8 1V13M12 1V13" stroke="#d0d0d0" stroke-width="1"/><path d="M1 8 L3 8 L5 5 L7 7 L9 10 L14 10" stroke="#202020" fill="none" stroke-width="1.2"/></svg><div style="position:absolute;left:762px;top:367px;width:16px;height:14px;background:#c0c0c0;box-shadow:inset -1px -1px 0 #000, inset 1px 1px 0 #fff, inset -2px -2px 0 #808080;overflow:hidden"><svg width="16" height="14" style="position:absolute;left:0;top:0"><path d="M5 4 L12 11 M12 4 L5 11" stroke="#fff" stroke-width="1.6"/><path d="M4 3 L11 10 M11 3 L4 10" stroke="#808080" stroke-width="1.9"/></svg></div><div style="position:absolute;left:744px;top:367px;width:16px;height:14px;background:#c0c0c0;box-shadow:inset -1px -1px 0 #000, inset 1px 1px 0 #fff, inset -2px -2px 0 #808080;overflow:hidden"><div style="position:absolute;left:3px;top:2px;width:7px;height:6px;border:1px solid #000;border-top-width:2px"></div></div><div style="position:absolute;left:728px;top:367px;width:16px;height:14px;background:#c0c0c0;box-shadow:inset -1px -1px 0 #000, inset 1px 1px 0 #fff, inset -2px -2px 0 #808080;overflow:hidden"><div style="position:absolute;left:4px;top:9px;width:6px;height:2px;background:#000"></div></div><div style="position:absolute;left:351px;top:384px;width:429px;height:160px;background:#fff;overflow:hidden"><svg width="429" height="160" style="position:absolute;left:0;top:0"><g transform="translate(-351,-384)"><line x1="394.5" y1="406" x2="394.5" y2="528" stroke="#000" stroke-width="1" /><line x1="440.5" y1="406" x2="440.5" y2="528" stroke="#000" stroke-width="1" /><line x1="467.5" y1="406" x2="467.5" y2="528" stroke="#000" stroke-width="1" /><line x1="487.5" y1="406" x2="487.5" y2="528" stroke="#000" stroke-width="1" /><line x1="502.5" y1="406" x2="502.5" y2="528" stroke="#000" stroke-width="1" /><line x1="514.5" y1="406" x2="514.5" y2="528" stroke="#000" stroke-width="1" /><line x1="524.5" y1="406" x2="524.5" y2="528" stroke="#000" stroke-width="1" /><line x1="533.5" y1="406" x2="533.5" y2="528" stroke="#000" stroke-width="1" /><line x1="541.5" y1="406" x2="541.5" y2="528" stroke="#000" stroke-width="1" /><line x1="548.5" y1="406" x2="548.5" y2="528" stroke="#000" stroke-width="1" /><line x1="594.5" y1="406" x2="594.5" y2="528" stroke="#000" stroke-width="1" /><line x1="621.5" y1="406" x2="621.5" y2="528" stroke="#000" stroke-width="1" /><line x1="641.5" y1="406" x2="641.5" y2="528" stroke="#000" stroke-width="1" /><line x1="656.5" y1="406" x2="656.5" y2="528" stroke="#000" stroke-width="1" /><line x1="668.5" y1="406" x2="668.5" y2="528" stroke="#000" stroke-width="1" /><line x1="678.5" y1="406" x2="678.5" y2="528" stroke="#000" stroke-width="1" /><line x1="687.5" y1="406" x2="687.5" y2="528" stroke="#000" stroke-width="1" /><line x1="695.5" y1="406" x2="695.5" y2="528" stroke="#000" stroke-width="1" /><line x1="702.5" y1="406" x2="702.5" y2="528" stroke="#000" stroke-width="1" /><line x1="421.5" y1="408" x2="421.5" y2="528" stroke="#000" stroke-width="1" stroke-dasharray="1 5" shape-rendering="crispEdges"/><line x1="455.5" y1="408" x2="455.5" y2="528" stroke="#000" stroke-width="1" stroke-dasharray="1 5" shape-rendering="crispEdges"/><line x1="478.5" y1="408" x2="478.5" y2="528" stroke="#000" stroke-width="1" stroke-dasharray="1 5" shape-rendering="crispEdges"/><line x1="495.5" y1="408" x2="495.5" y2="528" stroke="#000" stroke-width="1" stroke-dasharray="1 5" shape-rendering="crispEdges"/><line x1="508.5" y1="408" x2="508.5" y2="528" stroke="#000" stroke-width="1" stroke-dasharray="1 5" shape-rendering="crispEdges"/><line x1="519.5" y1="408" x2="519.5" y2="528" stroke="#000" stroke-width="1" stroke-dasharray="1 5" shape-rendering="crispEdges"/><line x1="529.5" y1="408" x2="529.5" y2="528" stroke="#000" stroke-width="1" stroke-dasharray="1 5" shape-rendering="crispEdges"/><line x1="537.5" y1="408" x2="537.5" y2="528" stroke="#000" stroke-width="1" stroke-dasharray="1 5" shape-rendering="crispEdges"/><line x1="545.5" y1="408" x2="545.5" y2="528" stroke="#000" stroke-width="1" stroke-dasharray="1 5" shape-rendering="crispEdges"/><line x1="575.5" y1="408" x2="575.5" y2="528" stroke="#000" stroke-width="1" stroke-dasharray="1 5" shape-rendering="crispEdges"/><line x1="609.5" y1="408" x2="609.5" y2="528" stroke="#000" stroke-width="1" stroke-dasharray="1 5" shape-rendering="crispEdges"/><line x1="632.5" y1="408" x2="632.5" y2="528" stroke="#000" stroke-width="1" stroke-dasharray="1 5" shape-rendering="crispEdges"/><line x1="649.5" y1="408" x2="649.5" y2="528" stroke="#000" stroke-width="1" stroke-dasharray="1 5" shape-rendering="crispEdges"/><line x1="662.5" y1="408" x2="662.5" y2="528" stroke="#000" stroke-width="1" stroke-dasharray="1 5" shape-rendering="crispEdges"/><line x1="673.5" y1="408" x2="673.5" y2="528" stroke="#000" stroke-width="1" stroke-dasharray="1 5" shape-rendering="crispEdges"/><line x1="683.5" y1="408" x2="683.5" y2="528" stroke="#000" stroke-width="1" stroke-dasharray="1 5" shape-rendering="crispEdges"/><line x1="691.5" y1="408" x2="691.5" y2="528" stroke="#000" stroke-width="1" stroke-dasharray="1 5" shape-rendering="crispEdges"/><line x1="699.5" y1="408" x2="699.5" y2="528" stroke="#000" stroke-width="1" stroke-dasharray="1 5" shape-rendering="crispEdges"/><line x1="729.5" y1="408" x2="729.5" y2="528" stroke="#000" stroke-width="1" stroke-dasharray="1 5" shape-rendering="crispEdges"/><line x1="393.5" y1="408" x2="393.5" y2="528" stroke="#000" stroke-width="1" stroke-dasharray="1 5" shape-rendering="crispEdges"/><line x1="390" y1="413.5" x2="749" y2="413.5" stroke="#000" stroke-width="1" /><line x1="390" y1="442.5" x2="749" y2="442.5" stroke="#000" stroke-width="1" /><line x1="390" y1="470.5" x2="749" y2="470.5" stroke="#000" stroke-width="1" /><line x1="390" y1="498.5" x2="749" y2="498.5" stroke="#000" stroke-width="1" /><line x1="390" y1="526.5" x2="749" y2="526.5" stroke="#000" stroke-width="1" /><rect x="390.5" y="406.5" width="359" height="122" fill="none" stroke="#000" stroke-width="1"/><line x1="417" y1="387.5" x2="434" y2="387.5" stroke="#000" stroke-width="1" /><line x1="410" y1="396.5" x2="434" y2="396.5" stroke="#00ff00" stroke-width="1" /><line x1="498" y1="387.5" x2="521" y2="387.5" stroke="#ff0000" stroke-width="1" /><line x1="498" y1="396.5" x2="521" y2="396.5" stroke="#0000ff" stroke-width="1" /><rect x="400.5" y="393.5" width="6" height="5" fill="none" stroke="#000"/><path d="M489.5 385.5 L494.5 385.5 L492 390 Z" fill="none" stroke="#000"/><path d="M492 393.5 L494.5 396.5 L492 399.5 L489.5 396.5 Z" fill="none" stroke="#000"/><clipPath id="c3"><rect x="391" y="407" width="358" height="121"/></clipPath><g clip-path="url(#c3)" shape-rendering="crispEdges"><polyline points="391.0,520.8 395.0,525.0 398.0,528.0 400.0,515.3 403.0,513.0 410.0,511.3 440.0,510.4 460.0,509.7 503.0,508.6 510.0,509.8 516.0,512.0 520.0,506.4 525.0,502.0 528.0,497.6 531.0,493.0 534.0,491.0 537.0,487.6 540.0,488.7 543.0,495.3 546.0,506.4 548.0,517.5 550.0,525.3 553.0,522.0 557.0,515.3 560.0,512.6 563.0,508.3 566.0,510.4 570.0,514.0 572.0,518.4 576.0,509.7 580.0,506.0 584.0,508.3 588.0,515.5 592.0,508.3 594.0,504.6 596.0,511.2 598.0,527.0 600.0,515.5 602.0,513.3 606.0,515.5 610.0,511.2 614.0,512.6 618.0,518.4 622.0,517.0 630.0,521.4 640.0,518.4 648.0,520.0 655.0,517.0 660.0,521.4 665.0,523.0 680.0,522.0 700.0,524.0 750.0,527.0" fill="none" stroke="#00e000" stroke-width="1.0" stroke-linejoin="round" /><polyline points="391.0,490.4 392.5,490.0 395.0,493.0 396.5,500.2 398.0,493.0 400.0,476.5 403.0,471.0 408.0,467.6 420.0,465.4 440.0,464.0 450.0,464.3 455.0,465.4 460.0,471.0 463.0,484.2 466.0,497.5 467.0,508.6 468.5,504.2 470.0,473.0 472.0,442.0 473.5,400.0 476.0,400.0 477.5,424.4 479.0,420.0 480.5,404.0 484.0,406.6 486.0,408.9 487.0,421.0 487.5,440.0 488.0,441.0 493.0,441.0 496.0,451.0 500.0,471.0 503.0,488.7 505.0,486.5 508.0,478.7 513.0,468.7 518.0,452.0 521.0,446.6 524.0,442.0 526.0,451.0 530.0,473.2 533.0,488.7 535.0,504.2 537.0,520.8 540.0,515.3 542.0,502.0 544.0,488.7 547.0,484.3 549.0,466.5 552.0,490.0 553.5,473.0 556.0,498.0 558.0,485.0 560.0,495.1 563.0,505.3 566.0,509.0 570.0,508.3 575.0,506.0 580.0,504.6 583.0,506.8 586.0,514.0 588.0,518.4 590.0,512.6 594.0,506.0 598.0,514.8 601.0,518.4 604.0,506.8 606.0,511.2 610.0,514.0 614.0,509.0 618.0,517.0 622.0,515.5 628.0,514.0 635.0,513.0 640.0,513.0 647.0,516.0 654.0,520.0 665.0,521.0 677.0,521.3 687.0,522.3 701.0,522.3 714.0,525.4 745.0,525.8 750.0,526.0" fill="none" stroke="#ff0000" stroke-width="1.0" stroke-linejoin="round" /><polyline points="391.0,485.3 415.0,485.5 438.0,487.6 441.0,496.0 445.0,498.0 449.0,490.0 451.0,463.0 453.0,470.0 456.0,485.0 458.0,494.2 460.0,470.0 462.0,464.3 465.0,480.0 467.0,488.0 469.0,484.0 471.0,462.0 472.0,456.5 474.0,466.5 476.0,464.3 478.0,471.0 482.0,475.4 486.0,473.2 488.0,475.4 495.0,477.6 500.0,477.6 503.0,482.0 506.0,476.5 510.0,478.7 513.0,484.3 516.0,479.8 520.0,466.5 524.0,459.9 527.0,466.5 530.0,479.8 532.0,483.0 535.0,487.0 537.0,497.6 539.0,513.0 542.0,504.2 545.0,493.0 548.0,486.5 550.0,477.6 552.0,471.0 553.5,445.0 554.5,445.0 556.0,498.0 558.0,485.0 560.0,495.0 563.0,503.0 566.0,508.3 570.0,501.7 575.0,502.4 580.0,506.8 586.0,514.0 590.0,512.0 594.0,506.0 600.0,518.4 604.0,508.0 610.0,514.0 618.0,516.0 625.0,516.0 640.0,517.0 650.0,518.0 655.0,520.0 665.0,524.0 680.0,522.0 700.0,524.0 750.0,527.0" fill="none" stroke="#000" stroke-width="1.0" stroke-linejoin="round" /><polyline points="415.0,485.5 438.0,487.6 441.0,494.2 443.0,498.6 446.0,495.3 448.0,488.7 450.0,463.2 452.0,470.0 455.0,485.0 457.0,494.2 459.0,470.0 461.0,464.3 463.0,473.2 466.0,484.3 468.0,483.0 470.0,464.3 472.0,458.8 474.0,466.5 476.0,464.3 480.0,471.0 485.0,476.5 490.0,474.3 495.0,479.8 500.0,479.8 503.0,476.5 506.0,468.7 508.0,459.9 510.0,466.5 512.0,475.4 515.0,486.5 518.0,495.3 521.0,502.0 524.0,497.6 527.0,493.0 530.0,488.7 535.0,487.6 539.0,502.0 542.0,510.9 546.0,506.4 549.0,503.9 555.0,509.7 560.0,514.0 565.0,515.5 570.0,490.8 575.0,471.6 580.0,477.0 585.0,496.6 588.0,515.5 590.0,526.5 603.0,526.5 607.0,517.0 611.0,504.6 615.0,500.6 620.0,503.9 622.0,493.0 623.0,516.0 626.0,520.0 630.0,526.0 645.0,526.0 650.0,516.0 655.0,518.0 660.0,525.0 668.0,522.0 675.0,513.0 680.0,519.0 683.0,507.0 684.0,518.0 690.0,521.0 700.0,523.0 720.0,526.0 750.0,526.5" fill="none" stroke="#0000ff" stroke-width="1.0" stroke-linejoin="round" /><path d="M468.5 451.5 L474.5 451.5 L471.5 457 Z" fill="#fff" stroke="#000"/><rect x="535.5" y="484.5" width="6" height="5" fill="none" stroke="#000"/></g></g></svg></div><div style="position:absolute;left:375px;top:389px;font:bold 7px 'Liberation Sans',sans-serif;color:#000;white-space:pre;line-height:1;">ms</div><div style="position:absolute;left:438px;top:384.5px;font:bold 7px 'Liberation Sans',sans-serif;color:#000;white-space:pre;line-height:1;">Total</div><div style="position:absolute;left:438px;top:393.5px;font:bold 7px 'Liberation Sans',sans-serif;color:#000;white-space:pre;line-height:1;">Net 3</div><div style="position:absolute;left:526px;top:384.5px;font:bold 7px 'Liberation Sans',sans-serif;color:#000;white-space:pre;line-height:1;">Net 2</div><div style="position:absolute;left:526px;top:393.5px;font:bold 7px 'Liberation Sans',sans-serif;color:#000;white-space:pre;line-height:1;">Net 1</div><div style="position:absolute;left:348px;top:409.3px;font:7.5px 'Liberation Sans',sans-serif;color:#000;white-space:pre;line-height:1;-webkit-text-stroke:0.15px #000;width:40px;text-align:right;letter-spacing:-0.2px">2.000</div><div style="position:absolute;left:348px;top:437.6px;font:7.5px 'Liberation Sans',sans-serif;color:#000;white-space:pre;line-height:1;-webkit-text-stroke:0.15px #000;width:40px;text-align:right;letter-spacing:-0.2px">1.500</div><div style="position:absolute;left:348px;top:465.9px;font:7.5px 'Liberation Sans',sans-serif;color:#000;white-space:pre;line-height:1;-webkit-text-stroke:0.15px #000;width:40px;text-align:right;letter-spacing:-0.2px">1.000</div><div style="position:absolute;left:348px;top:494.2px;font:7.5px 'Liberation Sans',sans-serif;color:#000;white-space:pre;line-height:1;-webkit-text-stroke:0.15px #000;width:40px;text-align:right;letter-spacing:-0.2px">0.500</div><div style="position:absolute;left:348px;top:522.5px;font:7.5px 'Liberation Sans',sans-serif;color:#000;white-space:pre;line-height:1;-webkit-text-stroke:0.15px #000;width:40px;text-align:right;letter-spacing:-0.2px">0.000</div><div style="position:absolute;left:382px;top:531.5px;font:bold 7px 'Liberation Sans',sans-serif;color:#000;white-space:pre;line-height:1;">100 Hz</div><div style="position:absolute;left:496px;top:531.5px;font:bold 7px 'Liberation Sans',sans-serif;color:#000;white-space:pre;line-height:1;">500</div><div style="position:absolute;left:540px;top:531.5px;font:bold 7px 'Liberation Sans',sans-serif;color:#000;white-space:pre;line-height:1;">1000</div><div style="position:absolute;left:648px;top:531.5px;font:bold 7px 'Liberation Sans',sans-serif;color:#000;white-space:pre;line-height:1;">5000</div><div style="position:absolute;left:692px;top:531.5px;font:bold 7px 'Liberation Sans',sans-serif;color:#000;white-space:pre;line-height:1;">10000</div><div style="position:absolute;left:6px;top:556px;width:160px;height:24px;background:#c0c0c0;box-shadow:inset -1px -1px 0 #000, inset 1px 1px 0 #c0c0c0, inset -2px -2px 0 #808080, inset 2px 2px 0 #fff;"></div><div style="position:absolute;left:9px;top:559px;width:154px;height:18px;background:#000080;"></div><div style="position:absolute;left:29px;top:561px;height:18px;line-height:18px;font:bold 12px 'Liberation Serif',serif;color:#fff;white-space:nowrap">Impulse resp...</div><svg style="position:absolute;left:11px;top:562px" width="16" height="14"><rect x="0" y="0" width="16" height="14" fill="#505040"/><rect x="0" y="0" width="15" height="13" fill="#f0f0f0"/><path d="M1 4H15M1 7H15M1 10H15M4 1V13M8 1V13M12 1V13" stroke="#d0d0d0" stroke-width="1"/><path d="M2.5 2 V11.5 H14" stroke="#404040" fill="none" stroke-width="1"/><path d="M3 10 L5 11" stroke="#404040"/></svg><div style="position:absolute;left:145px;top:561px;width:16px;height:14px;background:#c0c0c0;box-shadow:inset -1px -1px 0 #000, inset 1px 1px 0 #fff, inset -2px -2px 0 #808080;overflow:hidden"><svg width="16" height="14" style="position:absolute;left:0;top:0"><path d="M5 4 L12 11 M12 4 L5 11" stroke="#fff" stroke-width="1.6"/><path d="M4 3 L11 10 M11 3 L4 10" stroke="#808080" stroke-width="1.9"/></svg></div><div style="position:absolute;left:127px;top:561px;width:16px;height:14px;background:#c0c0c0;box-shadow:inset -1px -1px 0 #000, inset 1px 1px 0 #fff, inset -2px -2px 0 #808080;overflow:hidden"><div style="position:absolute;left:3px;top:2px;width:7px;height:6px;border:1px solid #000;border-top-width:2px"></div></div><div style="position:absolute;left:111px;top:561px;width:16px;height:14px;background:#c0c0c0;box-shadow:inset -1px -1px 0 #000, inset 1px 1px 0 #fff, inset -2px -2px 0 #808080;overflow:hidden"><div style="position:absolute;left:5px;top:2px;width:4px;height:3px;border:1px solid #000;border-top-width:2px"></div><div style="position:absolute;left:3px;top:5px;width:4px;height:3px;border:1px solid #000;border-top-width:2px;background:#c0c0c0"></div></div><div style="position:absolute;left:166px;top:556px;width:160px;height:24px;background:#c0c0c0;box-shadow:inset -1px -1px 0 #000, inset 1px 1px 0 #c0c0c0, inset -2px -2px 0 #808080, inset 2px 2px 0 #fff;"></div><div style="position:absolute;left:169px;top:559px;width:154px;height:18px;background:#000080;"></div><div style="position:absolute;left:189px;top:561px;height:18px;line-height:18px;font:bold 12px 'Liberation Serif',serif;color:#fff;white-space:nowrap">Vertical off a...</div><svg style="position:absolute;left:171px;top:562px" width="16" height="14"><rect x="0" y="0" width="16" height="14" fill="#505040"/><rect x="0" y="0" width="15" height="13" fill="#f0f0f0"/><path d="M1 4H15M1 7H15M1 10H15M4 1V13M8 1V13M12 1V13" stroke="#d0d0d0" stroke-width="1"/><path d="M1 5 Q7 1 14 5 M1 8 Q7 4 14 8 M1 11 Q7 7 14 11" stroke="#404040" fill="none" stroke-width="1"/></svg><div style="position:absolute;left:305px;top:561px;width:16px;height:14px;background:#c0c0c0;box-shadow:inset -1px -1px 0 #000, inset 1px 1px 0 #fff, inset -2px -2px 0 #808080;overflow:hidden"><svg width="16" height="14" style="position:absolute;left:0;top:0"><path d="M5 4 L12 11 M12 4 L5 11" stroke="#fff" stroke-width="1.6"/><path d="M4 3 L11 10 M11 3 L4 10" stroke="#808080" stroke-width="1.9"/></svg></div><div style="position:absolute;left:287px;top:561px;width:16px;height:14px;background:#c0c0c0;box-shadow:inset -1px -1px 0 #000, inset 1px 1px 0 #fff, inset -2px -2px 0 #808080;overflow:hidden"><div style="position:absolute;left:3px;top:2px;width:7px;height:6px;border:1px solid #000;border-top-width:2px"></div></div><div style="position:absolute;left:271px;top:561px;width:16px;height:14px;background:#c0c0c0;box-shadow:inset -1px -1px 0 #000, inset 1px 1px 0 #fff, inset -2px -2px 0 #808080;overflow:hidden"><div style="position:absolute;left:5px;top:2px;width:4px;height:3px;border:1px solid #000;border-top-width:2px"></div><div style="position:absolute;left:3px;top:5px;width:4px;height:3px;border:1px solid #000;border-top-width:2px;background:#c0c0c0"></div></div><div style="position:absolute;left:326px;top:556px;width:160px;height:24px;background:#c0c0c0;box-shadow:inset -1px -1px 0 #000, inset 1px 1px 0 #c0c0c0, inset -2px -2px 0 #808080, inset 2px 2px 0 #fff;"></div><div style="position:absolute;left:329px;top:559px;width:154px;height:18px;background:#000080;"></div><div style="position:absolute;left:349px;top:561px;height:18px;line-height:18px;font:bold 12px 'Liberation Serif',serif;color:#fff;white-space:nowrap">Filter gain, N...</div><svg style="position:absolute;left:331px;top:562px" width="16" height="14"><rect x="0" y="0" width="16" height="14" fill="#505040"/><rect x="0" y="0" width="15" height="13" fill="#f0f0f0"/><path d="M1 4H15M1 7H15M1 10H15M4 1V13M8 1V13M12 1V13" stroke="#d0d0d0" stroke-width="1"/><path d="M1.5 4.5H14.5" stroke="#000" stroke-width="1"/><path d="M2 12 L8 5" stroke="#f06060" stroke-width="1.5"/><path d="M6 4 L12 11" stroke="#4040ff" stroke-width="1"/></svg><div style="position:absolute;left:465px;top:561px;width:16px;height:14px;background:#c0c0c0;box-shadow:inset -1px -1px 0 #000, inset 1px 1px 0 #fff, inset -2px -2px 0 #808080;overflow:hidden"><svg width="16" height="14" style="position:absolute;left:0;top:0"><path d="M5 4 L12 11 M12 4 L5 11" stroke="#fff" stroke-width="1.6"/><path d="M4 3 L11 10 M11 3 L4 10" stroke="#808080" stroke-width="1.9"/></svg></div><div style="position:absolute;left:447px;top:561px;width:16px;height:14px;background:#c0c0c0;box-shadow:inset -1px -1px 0 #000, inset 1px 1px 0 #fff, inset -2px -2px 0 #808080;overflow:hidden"><div style="position:absolute;left:3px;top:2px;width:7px;height:6px;border:1px solid #000;border-top-width:2px"></div></div><div style="position:absolute;left:431px;top:561px;width:16px;height:14px;background:#c0c0c0;box-shadow:inset -1px -1px 0 #000, inset 1px 1px 0 #fff, inset -2px -2px 0 #808080;overflow:hidden"><div style="position:absolute;left:5px;top:2px;width:4px;height:3px;border:1px solid #000;border-top-width:2px"></div><div style="position:absolute;left:3px;top:5px;width:4px;height:3px;border:1px solid #000;border-top-width:2px;background:#c0c0c0"></div></div><div style="position:absolute;left:486px;top:556px;width:160px;height:24px;background:#c0c0c0;box-shadow:inset -1px -1px 0 #000, inset 1px 1px 0 #c0c0c0, inset -2px -2px 0 #808080, inset 2px 2px 0 #fff;"></div><div style="position:absolute;left:489px;top:559px;width:154px;height:18px;background:#000080;"></div><div style="position:absolute;left:509px;top:561px;height:18px;line-height:18px;font:bold 12px 'Liberation Serif',serif;color:#fff;white-space:nowrap">Vertical off a...</div><svg style="position:absolute;left:491px;top:562px" width="16" height="14"><rect x="0" y="0" width="16" height="14" fill="#505040"/><rect x="0" y="0" width="15" height="13" fill="#f0f0f0"/><path d="M1 4H15M1 7H15M1 10H15M4 1V13M8 1V13M12 1V13" stroke="#d0d0d0" stroke-width="1"/><path d="M2 5 Q3 2 8 2.5 L14 3 V6" stroke="#404040" fill="none" stroke-width="1"/><rect x="8" y="3" width="3" height="2" fill="#e04040"/><rect x="9" y="5" width="2" height="4" fill="#6060ff"/></svg><div style="position:absolute;left:625px;top:561px;width:16px;height:14px;background:#c0c0c0;box-shadow:inset -1px -1px 0 #000, inset 1px 1px 0 #fff, inset -2px -2px 0 #808080;overflow:hidden"><svg width="16" height="14" style="position:absolute;left:0;top:0"><path d="M5 4 L12 11 M12 4 L5 11" stroke="#fff" stroke-width="1.6"/><path d="M4 3 L11 10 M11 3 L4 10" stroke="#808080" stroke-width="1.9"/></svg></div><div style="position:absolute;left:607px;top:561px;width:16px;height:14px;background:#c0c0c0;box-shadow:inset -1px -1px 0 #000, inset 1px 1px 0 #fff, inset -2px -2px 0 #808080;overflow:hidden"><div style="position:absolute;left:3px;top:2px;width:7px;height:6px;border:1px solid #000;border-top-width:2px"></div></div><div style="position:absolute;left:591px;top:561px;width:16px;height:14px;background:#c0c0c0;box-shadow:inset -1px -1px 0 #000, inset 1px 1px 0 #fff, inset -2px -2px 0 #808080;overflow:hidden"><div style="position:absolute;left:5px;top:2px;width:4px;height:3px;border:1px solid #000;border-top-width:2px"></div><div style="position:absolute;left:3px;top:5px;width:4px;height:3px;border:1px solid #000;border-top-width:2px;background:#c0c0c0"></div></div><div style="position:absolute;left:646px;top:556px;width:160px;height:24px;background:#c0c0c0;box-shadow:inset -1px -1px 0 #000, inset 1px 1px 0 #c0c0c0, inset -2px -2px 0 #808080, inset 2px 2px 0 #fff;"></div><div style="position:absolute;left:649px;top:559px;width:154px;height:18px;background:#000080;"></div><div style="position:absolute;left:669px;top:561px;height:18px;line-height:18px;font:bold 12px 'Liberation Serif',serif;color:#fff;white-space:nowrap">Net 3</div><svg style="position:absolute;left:651px;top:562px" width="16" height="14"><rect x="0" y="0" width="16" height="14" fill="#505040"/><rect x="0" y="0" width="15" height="13" fill="#f0f0f0"/><path d="M1 4H15M1 7H15M1 10H15M4 1V13M8 1V13M12 1V13" stroke="#d0d0d0" stroke-width="1"/><rect x="1" y="1" width="14" height="12" fill="#fff"/><path d="M3 2.5 H8 M8 4.5 H14 M8 8.5 H14 M11 3 V10" stroke="#000" stroke-width="1"/><rect x="1" y="2" width="2" height="1" fill="#f00"/><rect x="1" y="6" width="2" height="2" fill="#0a0"/><rect x="1" y="9" width="3" height="2" fill="#66f"/><path d="M4 11.5 H13" stroke="#888" stroke-width="1"/></svg><div style="position:absolute;left:785px;top:561px;width:16px;height:14px;background:#c0c0c0;box-shadow:inset -1px -1px 0 #000, inset 1px 1px 0 #fff, inset -2px -2px 0 #808080;overflow:hidden"><svg width="16" height="14" style="position:absolute;left:0;top:0"><path d="M5 4 L12 11 M12 4 L5 11" stroke="#fff" stroke-width="1.6"/><path d="M4 3 L11 10 M11 3 L4 10" stroke="#808080" stroke-width="1.9"/></svg></div><div style="position:absolute;left:767px;top:561px;width:16px;height:14px;background:#c0c0c0;box-shadow:inset -1px -1px 0 #000, inset 1px 1px 0 #fff, inset -2px -2px 0 #808080;overflow:hidden"><div style="position:absolute;left:3px;top:2px;width:7px;height:6px;border:1px solid #000;border-top-width:2px"></div></div><div style="position:absolute;left:751px;top:561px;width:16px;height:14px;background:#c0c0c0;box-shadow:inset -1px -1px 0 #000, inset 1px 1px 0 #fff, inset -2px -2px 0 #808080;overflow:hidden"><div style="position:absolute;left:5px;top:2px;width:4px;height:3px;border:1px solid #000;border-top-width:2px"></div><div style="position:absolute;left:3px;top:5px;width:4px;height:3px;border:1px solid #000;border-top-width:2px;background:#c0c0c0"></div></div></body></html>
